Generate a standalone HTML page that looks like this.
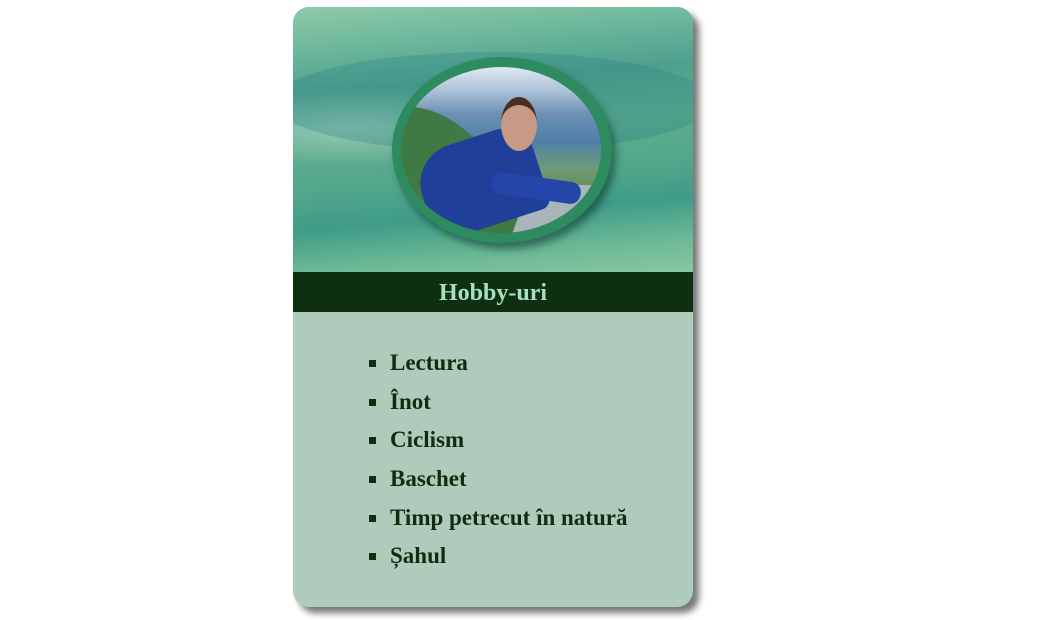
<!DOCTYPE html>
<html><head><meta charset="utf-8"><style>
body{margin:0;background:#fff;width:1049px;height:620px;position:relative;overflow:hidden;font-family:"Liberation Serif",serif}
.card{position:absolute;left:293px;top:7px;width:400px;height:600px;border-radius:16px;overflow:hidden;background:#afcbbb;box-shadow:6px 6px 7px #777}
.hdr{position:absolute;left:0;top:0;width:400px;height:265px;background:
radial-gradient(ellipse 180px 40px at 60px 120px,rgba(200,230,215,.5),transparent),
linear-gradient(175deg,#8fcaa8 0%,#6cb79c 15%,#4ea08e 30%,#5fae90 45%,#55a88a 60%,#3f9c88 75%,#6ab895 88%,#8bc6a2 100%)}
.band{position:absolute;left:-20px;top:45px;width:440px;height:100px;border-radius:50%;background:rgba(40,130,130,.3)}
.frame{position:absolute;left:99px;top:50px;width:220px;height:186px;border-radius:50%;background:#2e8a5f;box-shadow:4px 6px 8px rgba(0,40,30,.5)}
.photo{position:absolute;left:108px;top:60px;width:200px;height:166px;border-radius:50%;overflow:hidden;background:linear-gradient(180deg,#dfe9f2 0%,#a9bfd6 15%,#6f90b4 28%,#4f7fa8 45%,#6c9a7a 60%,#6a8c4a 80%,#556b30 100%)}
.m1{position:absolute;left:-10px;top:40px;width:120px;height:160px;background:#3f7a45;border-radius:40% 60% 0 0;transform:skewX(20deg)}
.body1{position:absolute;left:20px;top:70px;width:120px;height:90px;background:#1f3f98;border-radius:40px 30px 10px 20px;transform:rotate(-18deg)}
.arm{position:absolute;left:90px;top:110px;width:90px;height:22px;background:#2446a8;border-radius:10px;transform:rotate(8deg)}
.head{position:absolute;left:100px;top:30px;width:36px;height:46px;background:#c89a86;border-radius:50%;border-top:8px solid #4a2e22}
.table{position:absolute;left:118px;top:118px;width:80px;height:60px;background:#a9b5b8;transform:skewX(-20deg)}
.title{position:absolute;left:0;top:265px;width:400px;height:40px;background:#0e3010;color:#a6e0c2;font-weight:bold;font-size:24px;text-align:center;line-height:42px}
ul{position:absolute;left:0;top:337px;margin:0;padding:0;list-style:none}
li{position:relative;left:97px;font-weight:bold;font-size:23px;color:#0f2e10;height:38.7px;line-height:38.7px;white-space:nowrap}
li:before{content:"";position:absolute;left:-21px;top:16px;width:7px;height:7px;background:#0f2e10}
</style></head><body>
<div class="card">
<div class="hdr"><div class="band"></div>
<div class="frame"></div>
<div class="photo"><div class="m1"></div><div class="table"></div><div class="body1"></div><div class="arm"></div><div class="head"></div></div>
</div>
<div class="title">Hobby-uri</div>
<ul>
<li>Lectura</li><li>Înot</li><li>Ciclism</li><li>Baschet</li><li>Timp petrecut în natură</li><li>Șahul</li>
</ul>
</div>
</body></html>
